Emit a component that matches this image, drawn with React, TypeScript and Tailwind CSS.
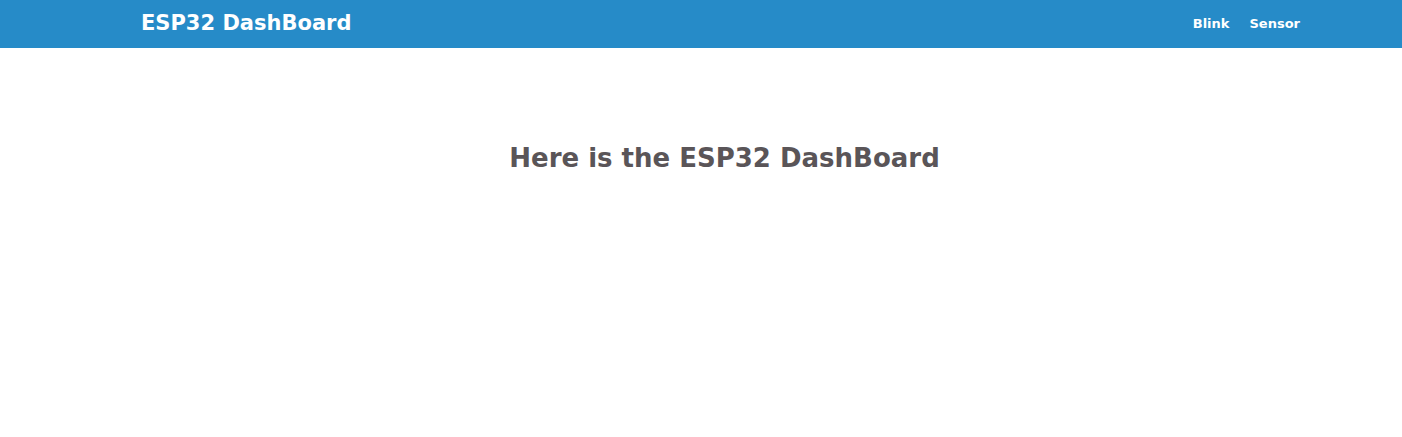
export default function App() {
  return (
    <div className="min-h-[437px] bg-white" style={{ fontFamily: '"DejaVu Sans", Verdana, sans-serif' }}>
      <nav className="h-12 bg-[#268bc8]">
        <div className="flex h-full items-center justify-between pl-[141px] pr-[102px]">
          <a href="#" className="text-[21px] font-bold text-white">
            ESP32 DashBoard
          </a>
          <ul className="-mt-px flex items-center gap-5 text-[13px] font-bold text-white">
            <li>
              <a href="#">Blink</a>
            </li>
            <li>
              <a href="#">Sensor</a>
            </li>
          </ul>
        </div>
      </nav>
      <main className="pl-[47px] pt-[91px]">
        <h1 className="text-center text-[26px] font-bold text-[#5a5558]">Here is the ESP32 DashBoard</h1>
      </main>
    </div>
  );
}
